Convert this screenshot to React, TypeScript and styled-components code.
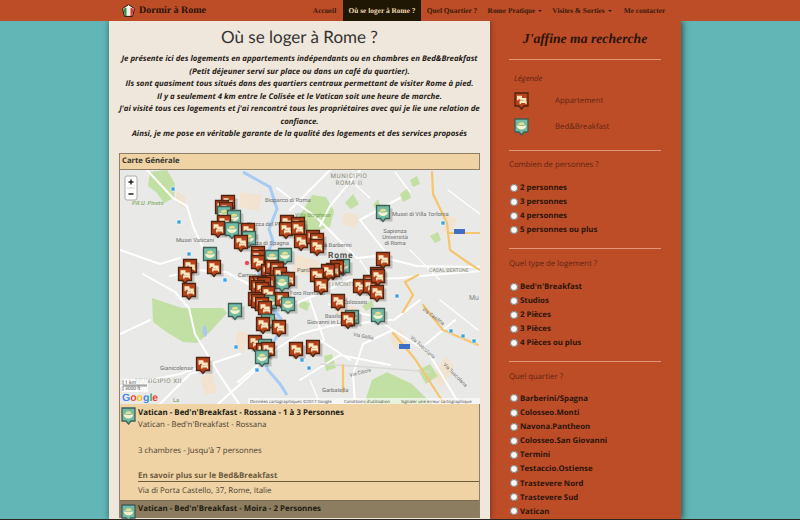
import React from "react";
import styled, { createGlobalStyle } from "styled-components";

const Global = createGlobalStyle`
  html, body { margin: 0; padding: 0; height: 520px; overflow: hidden; background: #62b6b5; }
  body { font-family: "Open Sans", "Liberation Sans", sans-serif; font-size: 7.8px; text-rendering: geometricPrecision; }
  * { box-sizing: border-box; }
`;

const display = `"Liberation Serif", serif`;

const Page = styled.div`
  width: 800px;
  height: 520px;
  overflow: hidden;
  display: flex;
  flex-direction: column;
  border-bottom: 1px solid #2b2620;
`;
const NavBar = styled.nav`
  height: 21px;
  flex: none;
  background: #bd4d27;
  display: flex;
  align-items: stretch;
  padding-left: 122px;
  position: relative;
  z-index: 3;
`;
const Brand = styled.div`
  width: 184px;
  display: flex;
  align-items: center;
  gap: 4px;
  font: 700 10px ${display};
  color: #2a1408;
`;
const NavList = styled.div`
  display: flex;
  align-items: stretch;
`;
const NavItem = styled.div<{ $active?: boolean; $w: number }>`
  width: ${(p) => p.$w}px;
  display: flex;
  align-items: center;
  justify-content: center;
  gap: 3px;
  white-space: nowrap;
  font: 700 7.4px ${display};
  color: ${(p) => (p.$active ? "#efdcae" : "#3a1a0a")};
  background: ${(p) => (p.$active ? "#1f1604" : "transparent")};
`;
const Caret = styled.span`
  border-top: 2px solid #3a1a0a;
  border-left: 2px solid transparent;
  border-right: 2px solid transparent;
  margin-top: 1px;
`;
const Body = styled.div`
  display: flex;
  padding-left: 109px;
  flex: 1;
  min-height: 0;
`;
const Main = styled.main`
  width: 381px;
  background: #efe7dc;
  box-shadow: 0 0 6px rgba(0, 0, 0, 0.45);
  padding: 0 10px;
  position: relative;
  z-index: 1;
`;
const Title = styled.h1`
  margin: 5px 0 0;
  text-align: center;
  font: 400 17px/22px Lato, "Open Sans", sans-serif;
  color: #333;
`;
const Intro = styled.p`
  margin: 5px 0 0;
  text-align: center;
  font-weight: 700;
  font-style: italic;
  font-size: 7.85px;
  line-height: 12.55px;
  color: #1f1a14;
  white-space: nowrap;
`;
const Panel = styled.section`
  margin-top: 12px;
  border: 1px solid #8d7f66;
  border-bottom: 0;
`;
const PanelHead = styled.div`
  height: 16px;
  background: #efd3a5;
  border-bottom: 1px solid #8d7f66;
  padding-left: 2px;
  font-weight: 700;
  font-size: 7.7px;
  line-height: 15px;
  color: #333;
`;
const MapBox = styled.svg`
  display: block;
  width: 360px;
  height: 234px;
`;
const Row = styled.article<{ $dark?: boolean }>`
  position: relative;
  background: ${(p) => (p.$dark ? "#8c7d60" : "#efd3a5")};
  padding: ${(p) => (p.$dark ? "2px" : "3px")} 0 3px 18px;
  color: #4b4030;
  font-size: 7.9px;
  line-height: 12.6px;
  height: ${(p) => (p.$dark ? "auto" : "96px")};
  border-top: ${(p) => (p.$dark ? "1px solid #7a6c52" : "0")};
`;
const RowPin = styled.svg`
  position: absolute;
  left: 1px;
  top: 3px;
  width: 15px;
  height: 18px;
`;
const RowTitle = styled.div`
  font-weight: 700;
  color: #221b10;
`;
const RowLine = styled.div`
  min-height: 12.6px;
`;
const RowLink = styled.div`
  font-weight: 700;
  color: #6d5c3e;
  border-bottom: 1px solid #6d5c3e;
  margin-bottom: 3px;
  height: 12px;
`;
const Side = styled.aside`
  width: 191px;
  background: #bd4d27;
  box-shadow: 2px 0 6px rgba(0, 0, 0, 0.55);
  padding: 0 20px 0 19px;
  color: #5f2410;
`;
const SideTitle = styled.h2`
  margin: 8px 0 0;
  text-align: center;
  font: italic 700 13.7px/20px ${display};
  color: #2a1408;
  white-space: nowrap;
`;
const Rule = styled.hr`
  border: 0;
  height: 1px;
  background: #e2957a;
  margin: 0;
`;
const LegendCap = styled.div`
  font-style: italic;
  padding-left: 5px;
  line-height: 12px;
  margin-bottom: 3px;
`;
const LegendRow = styled.div`
  display: flex;
  align-items: center;
  height: 26px;
  padding-left: 5px;
  gap: 26px;
`;
const LegendPin = styled.svg`
  width: 15px;
  height: 18px;
`;
const Question = styled.div`
  line-height: 12px;
`;
const Options = styled.div`
  display: flex;
  flex-direction: column;
`;
const OptionRow = styled.label`
  display: flex;
  align-items: center;
  height: 14.1px;
  gap: 2px;
  font-weight: 700;
  color: #2a1408;
  white-space: nowrap;
`;
const Radio = styled.input`
  width: 8px;
  height: 8px;
  margin: 0 0 1px 1px;
`;
const Block = styled.div<{ $top: number; $gap: number; $bottom: number }>`
  padding: ${(p) => p.$top}px 0 ${(p) => p.$bottom}px;
  & > ${Question} { margin-bottom: ${(p) => p.$gap}px; }
`;

type Kind = "o" | "t";

const PinShape = ({ kind }: { kind: Kind }) =>
  kind === "o" ? (
    <g>
      <path d="M1 1h13v13H10L7.500 17 5 14H1z" fill="#b8441c" stroke="#4e2410" strokeWidth="1.300" />
      <path d="M3 3.800h5v2.200h4.300v2.400h-1v1.300H9.800V8.600H6.300V7.200H4.600v1H3z" fill="#f8e9c4" />
      <path d="M5.600 8.800h7v3.200h-1.300v-1H7v1H5.600z" fill="#f8e9c4" />
    </g>
  ) : (
    <g>
      <path d="M1 1h13v13H10L7.500 17 5 14H1z" fill="#72bba6" stroke="#3f5f56" strokeWidth="1.300" />
      <path d="M2.600 7.200c2.300.9 7.500.9 9.800 0-.4 2.900-2.500 4.300-4.900 4.300S3 10.100 2.600 7.200z" fill="#f8f1cc" />
      <path d="M4.200 6.900c.3-2 1.900-2.900 3.400-2.600 1.400-.5 3 .5 3.200 2.400-2.100.6-4.500.6-6.600.2z" fill="#e9dc8a" />
    </g>
  );

const pins: [number, number, Kind][] = [
  [228, 203, "o"], [222, 208, "o"], [226, 210, "o"], [224, 214, "t"], [234, 218, "t"], [224, 223, "o"],
  [218, 229, "o"], [248, 231, "o"], [232, 230, "t"], [210, 255, "t"], [190, 267, "o"], [185, 275, "o"],
  [214, 268, "o"], [189, 291, "o"], [249, 239, "t"], [241, 243, "o"],
  [287, 223, "o"], [298, 225, "o"], [286, 230, "o"], [298, 229, "o"], [301, 242, "o"], [313, 238, "o"],
  [317, 241, "o"], [317, 247, "o"], [383, 213, "t"], [383, 260, "o"], [377, 275, "o"], [343, 267, "t"], [337, 268, "o"],
  [333, 271, "o"], [328, 272, "o"], [317, 276, "o"], [321, 286, "o"], [338, 302, "o"], [360, 287, "o"],
  [370, 283, "o"], [370, 287, "o"], [378, 277, "o"], [377, 293, "o"], [352, 318, "t"], [348, 320, "o"],
  [378, 316, "t"], [313, 348, "o"], [296, 350, "o"], [203, 365, "o"], [235, 311, "t"],
  [258, 254, "o"], [258, 258, "o"], [272, 258, "t"], [285, 256, "t"], [258, 263, "o"], [268, 272, "o"],
  [272, 268, "o"], [277, 270, "o"], [280, 275, "o"], [288, 280, "o"], [282, 283, "t"], [268, 283, "o"],
  [256, 284, "o"], [260, 284, "o"], [264, 285, "o"], [258, 288, "o"], [262, 290, "o"], [268, 294, "o"],
  [255, 300, "o"], [270, 303, "t"], [258, 302, "o"], [262, 305, "o"], [282, 300, "o"], [265, 309, "o"], [288, 305, "t"],
  [268, 322, "t"], [263, 325, "o"], [279, 328, "o"],
  [255, 343, "o"], [265, 347, "t"], [263, 351, "o"], [268, 350, "o"], [262, 358, "t"],
];

const stations: [number, number][] = [
  [173, 189], [179, 222], [189, 254], [225, 280], [236, 347], [257, 370], [443, 223], [397, 296],
  [451, 331], [463, 336], [474, 341], [302, 360], [309, 368], [366, 286],
];

const green = "#c3e0a4";
const RomeMap = () => (
  <MapBox viewBox="120 170 360 234" role="img" aria-label="Carte de Rome">
    <rect x="120" y="170" width="360" height="234" fill="#e9e9e7" />
    {/* built-up blocks */}
    <g fill="#f1e3cf">
      <path d="M176 190l10 8-3 10-7-8zM240 192l22 3-4 16-18-4zM296 255l24 6-4 16-24-6zM345 212l14 4-3 12-14-4z" />
      <path d="M238 330l10 3-4 20-9-6zM200 378l12-6 5 20-11 3zM445 215l12 3-6 18-9-6zM432 378l14-22 8 10-11 22z" />
      <path d="M390 335l12-5 5 14-12 6zM338 304l20 3-4 12-18-4z" />
    </g>
    {/* parks */}
    <g fill={green}>
      <path d="M150 172l17-2 8 14-1 14-10 5-8-11-8-6z" />
      <path d="M152 298l21 7 9 3h41l4 5-17 19-13 11-14-1-15-9-15-11z" />
      <path d="M302 212l10-17 14 2 8 14-4 16-20 5-14-6z" />
      <path d="M345 203l8-9 6 10-8 5zM400 194l8-6 3 10-8 4zM373 205l5-6 3 8-4 4z" />
      <path d="M372 380l15-8 25 12 20 20h-68z" />
      <path d="M418 370l12-6 8 12-12 8zM430 236l8-4 3 8-6 3zM324 356l8-2 4 14-10 3z" />
      <path d="M410 180l7-4 3 8-7 3zM300 300l10 3-3 8-8-4zM362 306l10-6 2 6-8 5z" />
    </g>
    <path d="M205 325c2 4 3 8 1 12-3-1-4-6-3-10z" fill="#a9c9f2" />
    {/* roads */}
    <g fill="none" stroke="#fff" strokeWidth="2" strokeLinecap="round" strokeLinejoin="round">
      <path d="M120 334l30-14M143 274l32 18 14 16 6 26 24 40 20 30M238 382l40-34 22-14 30-8 62-6M218 404l38-34" />
      <path d="M147 170l26 28 14 8 6 20 10 22M170 276l26-6 30 2 30 16M120 250l40 14 20-6M160 404l30-30 20-6" />
      <path d="M277 188l40 30 40 40 20-2 40 10 62 1M330 170l-40 40M360 170l-30 36-10 20M400 198l-40 22 24 30" />
      <path d="M393 330l-20-14-20-4-24-8M393 330l35 22 30 50M393 330l-30 14-10 30 2 30M432 275l48-4M420 300l-26 20" />
      <path d="M250 298l40 8 60-26 50-2 32-3M300 380l40-25 50 10M120 386l60-12 60-20M310 300l14 40M320 340l30 20M425 345l30-25" />
      <path d="M448 190l32 24M350 180l20 18M395 172l15 20M440 300l38 30M310 380l10 24M410 250l30 30M360 260l20 30" strokeWidth="1.300" />
    </g>
    <path d="M320 364c30 2 70 4 110 8" fill="none" stroke="#d9d9d7" strokeWidth="1.500" />
    {/* river */}
    <path d="M243 172l27 15 7 22-8 20 4 12-14 32-6 22 14 6 14 18-2 14-7 12-7 17 3 8 12 14 7 11" fill="none" stroke="#a6cbf5" strokeWidth="3" />
    {/* motorways */}
    <g fill="none" stroke="#f6c56d" strokeWidth="2.200" strokeLinecap="round" strokeLinejoin="round">
      <path d="M432 172l1 22 14 29 3 27 20 14 10 6M450 233h30" />
      <path d="M418 275l-13 7 8 13-10 17M423 305l20 25 35 15M393 333l22 26 28 43M343 365v27" />
    </g>
    {/* transit stops */}
    <g fill="#3aa3e6" stroke="#fff" strokeWidth=".6">
      {stations.map(([x, y], i) => <rect key={i} x={x - 2} y={y - 2} width="4" height="4" rx=".6" />)}
    </g>
    <rect x="454" y="229" width="11" height="5" fill="#3f6fc4" />
    <rect x="399" y="344" width="11" height="5" fill="#3f6fc4" />
    <circle cx="247" cy="263" r="2.600" fill="#e24a5a" stroke="#fff" strokeWidth=".6" />
    {/* labels */}
    <g fontFamily="Roboto, 'Open Sans', sans-serif" fontSize="5.800" fill="#6d6d6d">
      <text x="349" y="178" fontSize="6.300" letterSpacing=".6" textAnchor="middle" fill="#8a8a7a">MUNICIPIO</text>
      <text x="349" y="185" fontSize="6.300" letterSpacing=".6" textAnchor="middle" fill="#8a8a7a">ROMA II</text>
      <text x="265" y="202">Bioparco di Roma</text>
      <text x="295" y="217" fill="#6a9a4a" fontStyle="italic">Villa Borghese</text>
      <text x="392" y="216">Musei di Villa Torlonia</text>
      <text x="395" y="233" textAnchor="middle">Sapienza</text>
      <text x="395" y="239" textAnchor="middle">Università</text>
      <text x="395" y="245" textAnchor="middle">di Roma</text>
      <text x="176" y="242">Musei Vaticani</text>
      <text x="132" y="205" fill="#6a9a4a" fontStyle="italic">P.R.U. Pineto</text>
      <text x="247" y="226">Piazza del Popolo</text>
      <text x="253" y="245">zza di Spagna</text>
      <text x="310" y="247">Piazza Barberini</text>
      <text x="328" y="258" fontSize="8.500" fontWeight="700" letterSpacing=".8" fill="#555">Rome</text>
      <text x="238" y="277">Campo de' Fiori</text>
      <text x="297" y="272">Pantheon</text>
      <text x="290" y="295">Foro Romano</text>
      <text x="332" y="286" fill="#8a8a7a">I MONTI</text>
      <text x="343" y="304">Colosseo</text>
      <text x="325" y="318">Basilica San</text>
      <text x="307" y="324">Giovanni in Laterano</text>
      <text x="160" y="370">Gianicolense</text>
      <text x="135" y="383" fontSize="6.300" letterSpacing=".5" fill="#8a8a7a">MUNICIPIO XII</text>
      <text x="350" y="377" fontSize="5" transform="rotate(-15 350 377)">Via Cilicia</text>
      <text x="353" y="336" fontSize="5" transform="rotate(10 353 336)">Via Gallia</text>
      <text x="322" y="392">Garbatella</text>
      <text x="429" y="272" fontSize="5.200" fill="#8a8a7a">CASAL BERTONE</text>
      <text x="469" y="300" fontSize="7" fill="#888">Mu</text>
      <text x="422" y="310" transform="rotate(36 422 310)" fontSize="5">Via Casilina</text>
      <text x="410" y="338" transform="rotate(42 410 338)" fontSize="5">Via Tuscolana</text>
      <text x="443" y="365" transform="rotate(45 443 365)" fontSize="5">Via Tuscolana</text>
      <text x="173" y="402" fill="#6a9a4a">La</text>
    </g>
    {/* zoom control */}
    <g>
      <rect x="125" y="176" width="12" height="24" rx="2" fill="#fff" stroke="#aaa" />
      <path d="M127 188h8" stroke="#ccc" />
      <path d="M128.500 182h5M131 179.500v5M128.500 194h5" stroke="#222" strokeWidth="1.400" />
    </g>
    {/* scale */}
    <g fontFamily="'Open Sans', sans-serif" fontSize="4.800" fill="#333">
      <rect x="122" y="379" width="26" height="13" fill="#fff" fillOpacity=".75" />
      <path d="M123 380v5h24M123 391v-5h24" fill="none" stroke="#555" strokeWidth=".6" />
      <text x="125" y="384">1 km</text>
      <text x="125" y="390">3000 ft</text>
    </g>
    <g fontFamily="'Liberation Sans', sans-serif" fontSize="10.500" fontWeight="700" stroke="#fff" strokeWidth=".3" paintOrder="stroke">
      <text x="122" y="401" fill="#4285f4">G<tspan fill="#ea4335">o</tspan><tspan fill="#fbbc05">o</tspan><tspan fill="#4285f4">g</tspan><tspan fill="#34a853">l</tspan><tspan fill="#ea4335">e</tspan></text>
    </g>
    <g fontFamily="'Open Sans', sans-serif" fontSize="4.300" fill="#444">
      <rect x="248" y="398" width="232" height="6" fill="#fff" fillOpacity=".6" />
      <text x="250" y="402.500">Données cartographiques ©2017 Google</text>
      <text x="344" y="402.500">Conditions d'utilisation</text>
      <text x="401" y="402.500">Signaler une erreur cartographique</text>
    </g>
    {pins.map(([x, y, k], i) => (
      <g key={i} transform={`translate(${x - 7.5} ${y - 8.5})`}>
        <path d="M4 4h13v13H4z" fill="#000" opacity=".18" />
        <PinShape kind={k} />
      </g>
    ))}
  </MapBox>
);

const Pin = ({ kind }: { kind: Kind }) => (
  <LegendPin viewBox="0 0 15 18">
    <PinShape kind={kind} />
  </LegendPin>
);

const Option = ({ label }: { label: string }) => (
  <OptionRow>
    <Radio type="radio" />
    {label}
  </OptionRow>
);

export default function App() {
  return (
    <Page>
      <Global />
      <NavBar>
        <Brand>
          <svg width="13" height="13" viewBox="0 0 13 13">
            <path d="M6.500.6l6 4-2 7.800h-8l-2-7.800z" fill="#f4f1e8" stroke="#2a1408" strokeWidth="1" />
            <path d="M1.300 5l3.200-1.600V12H3z" fill="#2f8f46" />
            <path d="M8.500 3.400L11.700 5 10 12H8.500z" fill="#d8382e" />
          </svg>
          Dormir à Rome
        </Brand>
        <NavList>
          <NavItem $w={37}>Accueil</NavItem>
          <NavItem $w={78} $active>Où se loger à Rome ?</NavItem>
          <NavItem $w={62}>Quel Quartier ?</NavItem>
          <NavItem $w={64}>Rome Pratique <Caret /></NavItem>
          <NavItem $w={70}>Visites &amp; Sorties <Caret /></NavItem>
          <NavItem $w={55}>Me contacter</NavItem>
        </NavList>
      </NavBar>
      <Body>
        <Main>
          <Title>Où se loger à Rome ?</Title>
          <Intro>
            Je présente ici des logements en appartements indépendants ou en chambres en Bed&amp;Breakfast<br />
            (Petit déjeuner servi sur place ou dans un café du quartier).<br />
            Ils sont quasiment tous situés dans des quartiers centraux permettant de visiter Rome à pied.<br />
            Il y a seulement 4 km entre le Colisée et le Vatican soit une heure de marche.<br />
            J'ai visité tous ces logements et j'ai rencontré tous les propriétaires avec qui je lie une relation de<br />
            confiance.<br />
            Ainsi, je me pose en véritable garante de la qualité des logements et des services proposés
          </Intro>
          <Panel>
            <PanelHead>Carte Générale</PanelHead>
            <RomeMap />
            <Row>
              <RowPin viewBox="0 0 15 18"><PinShape kind="t" /></RowPin>
              <RowTitle>Vatican - Bed'n'Breakfast - Rossana - 1 à 3 Personnes</RowTitle>
              <RowLine>Vatican - Bed'n'Breakfast - Rossana</RowLine>
              <RowLine />
              <RowLine>3 chambres - Jusqu'à 7 personnes</RowLine>
              <RowLine />
              <RowLink>En savoir plus sur le Bed&amp;Breakfast</RowLink>
              <RowLine>Via di Porta Castello, 37, Rome, Italie</RowLine>
            </Row>
            <Row $dark>
              <RowPin viewBox="0 0 15 18"><PinShape kind="t" /></RowPin>
              <RowTitle>Vatican - Bed'n'Breakfast - Moira - 2 Personnes</RowTitle>
            </Row>
          </Panel>
        </Main>
        <Side>
          <SideTitle>J'affine ma recherche</SideTitle>
          <Block $top={10} $gap={0} $bottom={0}><Rule /></Block>
          <Block $top={13} $gap={0} $bottom={10}>
            <LegendCap>Légende</LegendCap>
            <LegendRow><Pin kind="o" />Appartement</LegendRow>
            <LegendRow><Pin kind="t" />Bed&amp;Breakfast</LegendRow>
          </Block>
          <Rule />
          <Block $top={8} $gap={10} $bottom={10.6}>
            <Question>Combien de personnes ?</Question>
            <Options>
              {["2 personnes", "3 personnes", "4 personnes", "5 personnes ou plus"].map((o) => <Option key={o} label={o} />)}
            </Options>
          </Block>
          <Rule />
          <Block $top={9} $gap={10} $bottom={10.5}>
            <Question>Quel type de logement ?</Question>
            <Options>
              {["Bed'n'Breakfast", "Studios", "2 Pièces", "3 Pièces", "4 Pièces ou plus"].map((o) => <Option key={o} label={o} />)}
            </Options>
          </Block>
          <Rule />
          <Block $top={9} $gap={9} $bottom={0}>
            <Question>Quel quartier ?</Question>
            <Options>
              {["Barberini/Spagna", "Colosseo.Monti", "Navona.Pantheon", "Colosseo.San Giovanni", "Termini", "Testaccio.Ostiense", "Trastevere Nord", "Trastevere Sud", "Vatican"].map((o) => <Option key={o} label={o} />)}
            </Options>
          </Block>
        </Side>
      </Body>
    </Page>
  );
}
